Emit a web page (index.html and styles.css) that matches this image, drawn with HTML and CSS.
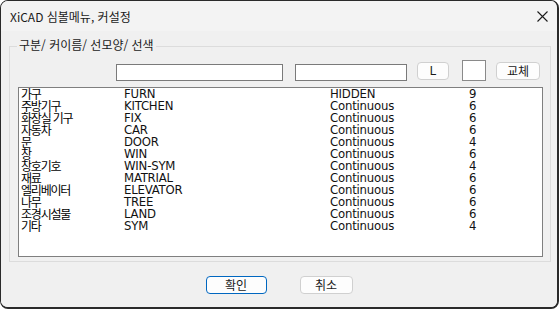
FILE: index.html
```html
<!DOCTYPE html>
<html lang="ko">
<head>
<meta charset="utf-8">
<title>XiCAD 심볼메뉴, 커설정</title>
<link rel="stylesheet" href="styles.css">
</head>
<body>
<div class="window">
  <div class="titlebar">
    <span class="title">XiCAD 심볼메뉴, 커설정</span>
    <svg class="close" width="11" height="11" viewBox="0 0 11 11"><path d="M0.5 0.5 L10.5 10.5 M10.5 0.5 L0.5 10.5" stroke="#1b1b1b" stroke-width="1.1" fill="none"/></svg>
  </div>
  <div class="body">
    <div class="group">
      <span class="legend">구분/ 커이름/ 선모양/ 선색</span>
      <div class="fields">
        <div class="input w1"></div>
        <div class="input w2"></div>
        <div class="btn small l">L</div>
        <div class="swatch"></div>
        <div class="btn small swap">교체</div>
      </div>
      <div class="list">
        <div class="row"><span class="ko">가구</span><span>FURN</span><span>HIDDEN</span><span>9</span></div>
        <div class="row"><span class="ko">주방기구</span><span>KITCHEN</span><span>Continuous</span><span>6</span></div>
        <div class="row"><span class="ko">화장실 기구</span><span>FIX</span><span>Continuous</span><span>6</span></div>
        <div class="row"><span class="ko">자동차</span><span>CAR</span><span>Continuous</span><span>6</span></div>
        <div class="row"><span class="ko">문</span><span>DOOR</span><span>Continuous</span><span>4</span></div>
        <div class="row"><span class="ko">창</span><span>WIN</span><span>Continuous</span><span>6</span></div>
        <div class="row"><span class="ko">창호기호</span><span>WIN-SYM</span><span>Continuous</span><span>4</span></div>
        <div class="row"><span class="ko">재료</span><span>MATRIAL</span><span>Continuous</span><span>6</span></div>
        <div class="row"><span class="ko">엘리베이터</span><span>ELEVATOR</span><span>Continuous</span><span>6</span></div>
        <div class="row"><span class="ko">나무</span><span>TREE</span><span>Continuous</span><span>6</span></div>
        <div class="row"><span class="ko">조경시설물</span><span>LAND</span><span>Continuous</span><span>6</span></div>
        <div class="row"><span class="ko">기타</span><span>SYM</span><span>Continuous</span><span>4</span></div>
      </div>
    </div>
    <div class="actions">
      <div class="btn big ok">확인</div>
      <div class="btn big cancel">취소</div>
    </div>
  </div>
</div>
</body>
</html>
```
FILE: styles.css
```css
* { box-sizing: border-box; }
html, body {
  margin: 0;
  padding: 0;
  background: #ffffff;
}
body {
  width: 559px;
  height: 309px;
  font-family: "Noto Sans CJK KR", "Noto Sans", sans-serif;
  color: #000;
}
.window {
  width: 559px;
  height: 309px;
  border: 1px solid #2a2a2a;
  border-right-width: 2px;
  border-bottom-width: 2px;
  border-radius: 8px;
  background: #f0f0f0;
  overflow: hidden;
  display: flex;
  flex-direction: column;
}
.titlebar {
  height: 30px;
  flex: none;
  background: #f3f3f3;
  display: flex;
  align-items: center;
  padding-left: 9px;
  padding-right: 9px;
}
.title {
  font-size: 12px;
  line-height: 14px;
  color: #1a1a1a;
  flex: 1;
  margin-top: 1px;
}
.close {
  display: block;
  margin-top: 1px;
}
.body {
  flex: 1;
  background: #f0f0f0;
  display: flex;
  flex-direction: column;
  padding: 15px 6px 0 8px;
}
.group {
  position: relative;
  height: 216px;
  border: 1px solid #dcdcdc;
  padding: 13px 10px 0 8px;
}
.legend {
  position: absolute;
  left: 7px;
  top: -10px;
  padding: 0 2px;
  background: #f0f0f0;
  font-size: 12px;
  line-height: 16px;
  color: #1a1a1a;
}
.fields {
  display: flex;
  align-items: flex-end;
  height: 21px;
  padding-left: 98px;
}
.input {
  height: 17px;
  background: #fff;
  border: 1px solid #7a7a7a;
}
.w1 { width: 167px; margin-right: 12px; }
.w2 { width: 112px; margin-right: 10px; }
.btn {
  display: flex;
  align-items: center;
  justify-content: center;
  background: #fdfdfd;
  border: 1px solid #d0d0d0;
  border-radius: 4px;
  font-size: 12px;
  color: #1a1a1a;
}
.small {
  height: 18px;
  margin-bottom: 1px;
  line-height: 14px;
}
.l { width: 32px; margin-right: 13px; font-family: "Liberation Sans", sans-serif; font-size: 12px; }
.swatch {
  width: 24px;
  height: 21px;
  background: #fff;
  border: 1px solid #8a8a8a;
  margin-right: 10px;
}
.swap { width: 44px; font-size: 12px; }
.list {
  margin-top: 6px;
  width: 525px;
  height: 170px;
  background: #fff;
  border: 1px solid #7f7f7f;
  padding: 0 0 0 2px;
  font-family: "DejaVu Sans Condensed", "DejaVu Sans", sans-serif;
  font-stretch: condensed;
  font-size: 13px;
  letter-spacing: -0.2px;
  color: #111;
}
.row {
  display: grid;
  grid-template-columns: 103px 206px 139px 1fr;
  height: 12px;
  line-height: 12px;
  white-space: nowrap;
}
.ko {
  font-family: "Noto Sans CJK KR", sans-serif;
  font-size: 12px;
  letter-spacing: -1.2px;
  color: #000;
}
.actions {
  display: flex;
  justify-content: center;
  gap: 33px;
  margin-top: 14px;
  margin-left: -8px;
  margin-right: -6px;
}
.big {
  height: 18px;
  font-size: 12px;
  line-height: 14px;
}
.ok { width: 61px; border-color: #0067c0; }
.cancel { width: 53px; }
```
